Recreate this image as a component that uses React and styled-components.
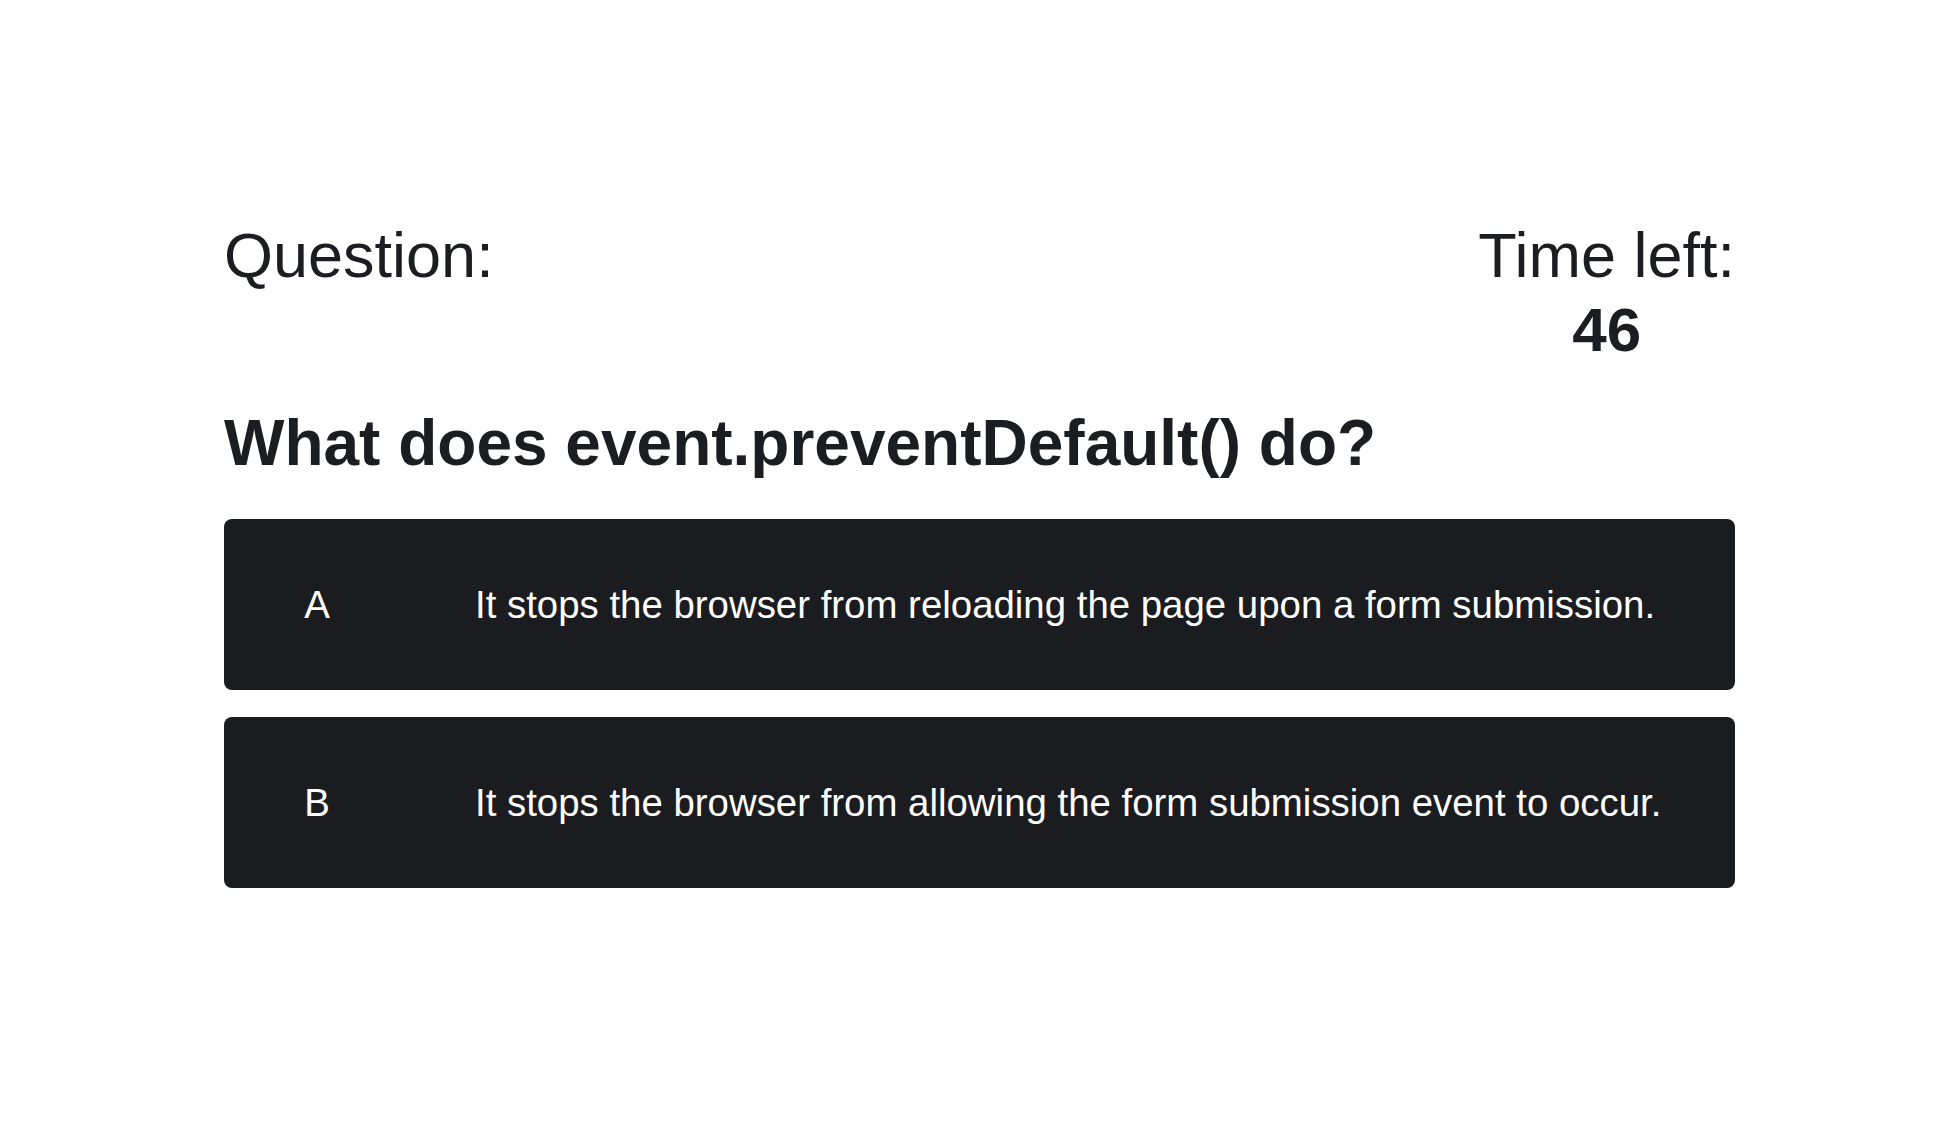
import React from "react";
import styled, { createGlobalStyle } from "styled-components";

const GlobalStyle = createGlobalStyle`
  * {
    box-sizing: border-box;
  }
  body {
    margin: 0;
    background: #ffffff;
    font-family: "Liberation Sans", Arial, Helvetica, sans-serif;
    color: #1c1d21;
  }
`;

const answers = [
  { key: "A", text: "It stops the browser from reloading the page upon a form submission." },
  { key: "B", text: "It stops the browser from allowing the form submission event to occur." },
];

const App = () => {
  return (
    <>
      <GlobalStyle />
      <Page>
        <Quiz>
          <Header>
            <Label>Question:</Label>
            <Timer>
              <Label>Time left:</Label>
              <Seconds>46</Seconds>
            </Timer>
          </Header>
          <Prompt>What does event.preventDefault() do?</Prompt>
          <Answers>
            {answers.map((a) => (
              <Answer key={a.key}>
                <Letter>{a.key}</Letter>
                <AnswerText>{a.text}</AnswerText>
              </Answer>
            ))}
          </Answers>
        </Quiz>
      </Page>
    </>
  );
};

const Page = styled.main`
  min-height: 100vh;
  padding-top: 218px;
`;

const Quiz = styled.section`
  width: 1511px;
  margin: 0 auto;
`;

const Header = styled.div`
  display: flex;
  justify-content: space-between;
  align-items: flex-start;
`;

const Label = styled.h2`
  margin: 0;
  font-size: 63px;
  font-weight: 400;
  line-height: 74px;
`;

const Timer = styled.div`
  display: flex;
  flex-direction: column;
  align-items: center;
`;

const Seconds = styled.span`
  font-size: 62px;
  font-weight: 700;
  line-height: 76px;
`;

const Prompt = styled.h1`
  margin: 38px 0 0;
  font-size: 64px;
  font-weight: 700;
  line-height: 74px;
`;

const Answers = styled.div`
  display: flex;
  flex-direction: column;
  gap: 27px;
  margin-top: 39px;
`;

const Answer = styled.button`
  display: flex;
  align-items: center;
  height: 171px;
  width: 100%;
  padding: 0;
  border: none;
  border-radius: 8px;
  background: #1b1c20;
  color: #ffffff;
  font-family: inherit;
  font-size: 38.4px;
  text-align: left;
  cursor: pointer;
`;

const Letter = styled.span`
  flex: 0 0 186px;
  text-align: center;
`;

const AnswerText = styled.span`
  margin-left: 65px;
`;

export default App;
